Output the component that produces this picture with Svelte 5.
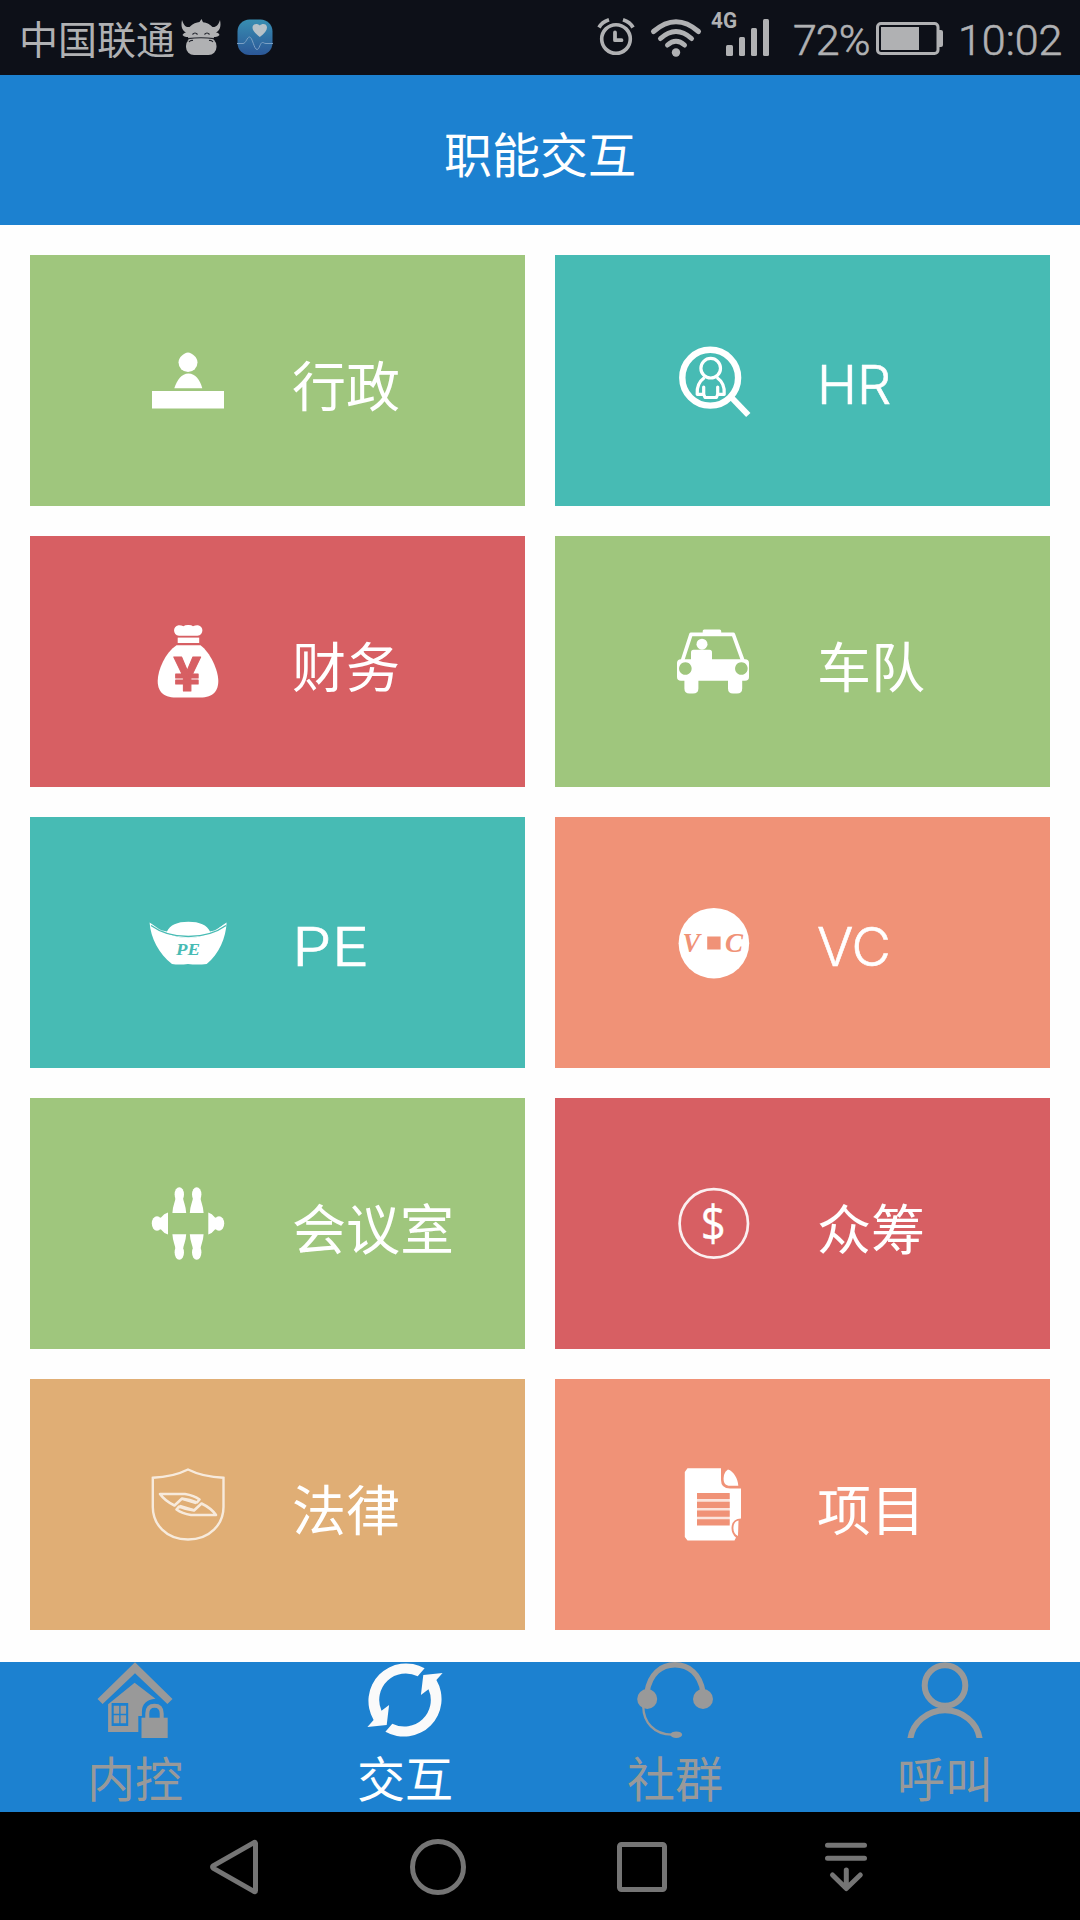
<script>
  const tiles = [
    { label: '行政', icon: 'desk', tone: 'green' },
    { label: 'HR', icon: 'search', tone: 'teal', latin: true },
    { label: '财务', icon: 'bag', tone: 'red' },
    { label: '车队', icon: 'car', tone: 'green' },
    { label: 'PE', icon: 'ingot', tone: 'teal', latin: true, wide: true },
    { label: 'VC', icon: 'coin', tone: 'coral', latin: true },
    { label: '会议室', icon: 'meeting', tone: 'green' },
    { label: '众筹', icon: 'dollar', tone: 'red' },
    { label: '法律', icon: 'shield', tone: 'sand' },
    { label: '项目', icon: 'doc', tone: 'coral' }
  ];
  const tabs = [
    { label: '内控', icon: 'house' },
    { label: '交互', icon: 'sync', active: true },
    { label: '社群', icon: 'headset' },
    { label: '呼叫', icon: 'person' }
  ];
</script>

<div class="screen">
  <div class="status">
    <span class="carrier">中国联通</span>
    <svg class="cow" viewBox="0 0 40 38" width="40" height="38">
      <path fill="#b0b1b3" d="M1 2C3 8 5 9.500 8.500 9C12 5.500 15.500 4.300 18.500 4L20.500 1L22 4.300C26 4.800 29 6.500 31.500 9C35 9.500 37.500 7 39 2C40.500 9 38.500 12.500 35 14.500C37 14.700 38 15.500 38.500 17C36.500 19 34.500 19 33 19L32.500 22H7.500L7 19C5 19 3.500 19 1.500 17C2.500 15.500 3.500 14.700 5 14.500C1.500 12.500-.5 9 1 2Z" />
      <rect x="5" y="20" width="30.500" height="17" rx="8" fill="#b0b1b3" />
      <path fill="none" stroke="#20232b" stroke-width="1.200" d="M7 20.700Q20 18.800 33 20.700M11.500 16.500q2.500-3 5 0M23.500 16.500q2.500-3 5 0M8 24q1.500-2 4-1.500M32 24q-1.500-2-4-1.500" />
    </svg>
    <svg class="health" viewBox="0 0 36 37" width="36" height="37">
      <defs>
        <linearGradient id="health-bg" x1="0" y1="0" x2="0" y2="1">
          <stop offset="0" stop-color="#388eb2" />
          <stop offset="1" stop-color="#2b5797" />
        </linearGradient>
      </defs>
      <rect x=".5" y=".5" width="35" height="35.500" rx="12" fill="url(#health-bg)" />
      <path d="M0 24.500H6C9 24.500 10 18 12.500 18C15.500 18 17 30.500 20 30.500C22.500 30.500 23 23.500 25.500 23.500C27 23.500 27 24.500 29 24.500H36" fill="none" stroke="#7ba0c4" stroke-width="1" />
      <path d="M22.800 18C18 14 15.500 11.500 15.500 8.500C15.500 4.500 20.500 4 22.800 6.500C25 4 30 4.500 30 8.500C30 11.500 27.500 14.500 22.800 18Z" fill="#b7c2c8" />
    </svg>
    <div class="spacer"></div>
    <svg class="alarm" viewBox="0 0 38 38" width="38" height="38" fill="none" stroke="#b0b1b3">
      <circle cx="19" cy="21" r="14.300" stroke-width="3.600" />
      <path d="M18 14.500V22.200H24.500" stroke-width="3.800" stroke-linecap="round" stroke-linejoin="round" />
      <path d="M2 9.500Q5 4 12 1.800M36 9.500Q33 4 26 1.800" stroke-width="3.800" />
    </svg>
    <svg class="wifi" viewBox="0 0 50 38" width="50" height="38" fill="none" stroke="#b0b1b3" stroke-width="5" stroke-linecap="round">
      <path d="M2.500 12.500Q25-7 47.500 12.500M9.500 19.500Q25 5.500 40.500 19.500M16.500 26Q25 18.500 33.500 26" />
      <circle cx="25" cy="33.500" r="4.200" fill="#b0b1b3" stroke="none" />
    </svg>
    <svg class="signal" viewBox="0 0 58 46" width="58" height="46" fill="#b0b1b3">
      <text x="0" y="17" textLength="26" lengthAdjust="spacingAndGlyphs">4G</text>
      <rect x="15" y="34" width="7" height="11" rx="1.500" />
      <rect x="28" y="26" width="6" height="19" rx="1.500" />
      <rect x="40" y="17" width="6" height="28" rx="1.500" />
      <rect x="52" y="8" width="6" height="37" rx="1.500" />
    </svg>
    <span class="percent">72%</span>
    <svg class="battery" viewBox="0 0 67 33" width="67" height="33">
      <rect x="1.500" y="1.500" width="60.500" height="30" rx="3.500" fill="none" stroke="#b0b1b3" stroke-width="3" />
      <rect x="5" y="5" width="38" height="23" fill="#b0b1b3" />
      <path d="M63 8h2a2 2 0 0 1 2 2v13a2 2 0 0 1-2 2h-2z" fill="#b0b1b3" />
    </svg>
    <span class="clock">10:02</span>
  </div>

  <header><h1>职能交互</h1></header>

  <main>
    {#each tiles as tile}
      <div class="tile {tile.tone}">
        <svg class="glyph" viewBox="0 0 76 76" width="76" height="76" fill="#fff">
          {#if tile.icon === 'desk'}
            <path d="M38 9.500C42 10 47.500 14 47.500 19.500A9.500 9.500 0 0 1 28.500 19.500C28.500 14 34 10 38 9.500Z" />
            <path d="M24.300 45.300C27 37 31.500 30.500 38.500 30.500S50 37 52.300 45.300Z" />
            <rect x="2" y="48" width="72" height="17.500" />
          {:else if tile.icon === 'search'}
            <g fill="none" stroke="#fff">
              <circle cx="35.200" cy="34.700" r="27.900" stroke-width="6.400" />
              <path d="M56 54L73.300 72" stroke-width="6" />
              <g stroke-width="3.200" stroke-linejoin="round">
                <circle cx="35.700" cy="25.200" r="9.800" />
                <path d="M29.500 34.500C24 38.500 21.500 43 22.200 51.300H28.700V44V51.300L30 54.500H41.400L42.700 51.300V44V51.300H49.200C50 43 47.500 38.500 41.900 34.500" />
              </g>
            </g>
          {:else if tile.icon === 'bag'}
            <path d="M29 11.800C22.500 11 22.500 2 28.500 1.200Q31 .9 33.500 2.300Q35 .8 38.300 .9Q41.500 .8 43 2.300Q45.500 .9 48 1.200C54 2 54 11 47.500 11.800Z" />
            <rect x="27.700" y="13.600" width="21.500" height="5.400" />
            <path d="M26.500 21.200H50.500C60 28 68.300 46 68.300 57C68.300 66 64 73.500 50 73.500H26C12 73.500 7.700 66 7.700 57C7.700 46 15 29 26.500 21.200Z" />
            <text class="yen" x="23.500" y="66.500" textLength="27.500" lengthAdjust="spacingAndGlyphs">¥</text>
          {:else if tile.icon === 'car'}
            <path d="M7.300 37L16 10.300H58.300L68 37" fill="none" stroke="#fff" stroke-width="3.700" stroke-linejoin="round" />
            <rect x="27.700" y="5.500" width="18.500" height="6" rx="1.500" />
            <circle cx="27" cy="20.200" r="5.500" />
            <rect x="16" y="25.700" width="21" height="16" rx="2.500" />
            <path fill-rule="evenodd" d="M6 35.200H70Q74 35.200 74 39V53Q74 56.800 70 56.800H67.200V64.500Q67.200 69.500 62 69.500H58Q53 69.500 53 64.500V56.800H23.400V64.500Q23.400 69.500 18 69.500H14.500Q9.400 69.500 9.400 64.500V56.800H6Q2 56.800 2 53V39Q2 35.200 6 35.200ZM10.300 38.200a6.300 6.300 0 1 0 .1 0ZM66.300 38.200a6.300 6.300 0 1 0 .1 0Z" />
          {:else if tile.icon === 'ingot'}
            <path d="M-.4 17.500Q38 48.500 76.600 17.500C76 33 69 49 56.700 59Q47 60 38 59Q29 60 22 59C9 49 .5 33-.4 17.500Z" />
            <path d="M-.4 17.500Q8 25 17 26.500C20 20 27 16.700 38.400 16.700S57 20 60 26.500Q69 25 76.600 17.500Q57 33 38.400 33T-.4 17.500Z" />
            <path d="M1 20.500Q16 31.500 38.400 31.500T76 20.500" class="teal-line" />
            <text class="pe" x="26" y="49.500" textLength="24" lengthAdjust="spacingAndGlyphs">PE</text>
          {:else if tile.icon === 'coin'}
            <circle cx="38.900" cy="38.200" r="35.300" />
            <text class="vc" x="7.500" y="47" textLength="17.500" lengthAdjust="spacingAndGlyphs">V</text>
            <rect class="hole" x="32.200" y="31.500" width="13.400" height="13" />
            <text class="vc" x="50" y="47" textLength="18" lengthAdjust="spacingAndGlyphs">C</text>
          {:else if tile.icon === 'meeting'}
            {#each [29.3, 46.7] as x}
              <g transform="translate({x} 0)">
                <ellipse cy="8.500" rx="4.700" ry="7.300" />
                <path d="M-3.500 11H3.500C4 15 6.600 20 6.900 27H-6.900C-6.600 20-4 15-3.500 11Z" />
                <ellipse cy="66.500" rx="4.700" ry="7.300" />
                <path d="M-3.500 64H3.500C4 60 6.600 55 6.900 48.300H-6.900C-6.600 55-4 60-3.500 64Z" />
              </g>
            {/each}
            <ellipse cx="69" cy="37.500" rx="5.200" ry="7.300" />
            <path d="M58.300 26.500Q62 27.500 65 31.500L70 33V42L65 43.500Q62 47.500 58.300 48.500Z" />
            <ellipse cx="7" cy="37.500" rx="5.200" ry="7.300" />
            <path d="M18 26.500Q14 27.500 11 31.500L6 33V42L11 43.500Q14 47.500 18 48.500Z" />
          {:else if tile.icon === 'dollar'}
            <circle cx="38.800" cy="37.400" r="34.200" fill="none" stroke="#fff" stroke-width="2.700" opacity=".9" />
            <text class="usd" x="25.800" y="54.500" textLength="25" lengthAdjust="spacingAndGlyphs">$</text>
          {:else if tile.icon === 'shield'}
            <g fill="none" stroke="#fff" opacity=".75">
              <path stroke-width="2.400" d="M38 2.500Q23 10 2.800 10.800V40C2.800 57 16 72.500 38 72.500S73.500 57 73.500 40V10.800Q53 10 38 2.500Z" />
              <path stroke-width="2.600" stroke-linejoin="round" d="M10 27H35Q44 28.500 49.500 32.500L47 35.500Q40 32.500 32 31.500L24.500 38.500Q15 34 10 27Z" />
              <path stroke-width="2.600" stroke-linejoin="round" d="M66 48H41Q32 46.500 26.500 42.500L29 39.500Q36 42.500 44 43.500L51.500 36.500Q61 41 66 48Z" />
              <path stroke-width="1.600" d="M31 32L46 36.500M45 43L30 38.500" />
            </g>
          {:else}
            <path d="M12.500 1.200H46V13Q46 21.500 55 21.500H66V51.500Q57 51.500 56.500 61Q56.500 67 61 70.500L59.500 73.500H12.500L9.800 70V5Z" />
            <path d="M53 2.500C58.500 4 63 12 63.300 18.800H55C50.500 18.800 48.600 16 48.600 12C48.600 7 50.500 4 53 2.500Z" />
            <path d="M63.500 53.500C59.500 54.500 58.400 57.500 58.400 61C58.400 65 60 67.500 63 69Z" />
            <rect class="hole" x="22" y="27" width="32.700" height="30" opacity=".25" />
            <path d="M22 29H54.700M22 37.800H54.700M22 46.600H54.700M22 55.400H54.700" class="rows" />
          {/if}
        </svg>
        <span class:latin={tile.latin} class:wide={tile.wide}>{tile.label}</span>
      </div>
    {/each}
  </main>

  <nav class="tabs">
    {#each tabs as tab}
      <div class="tab" class:active={tab.active}>
        <svg viewBox="0 0 76 76" width="76" height="76" fill="currentColor">
          {#if tab.icon === 'house'}
            <path d="M38 .3L75.500 37L70.400 42L38 11.300L5.600 42L.5 37Z" />
            <path fill-rule="evenodd" d="M37.600 20.700L58.500 36.800Q44.900 38 44.900 50V54H41.300V70H11.100V42.300ZM14.600 41V64H31.200V41Z" />
            <path d="M16.700 43.700h5.500v8h-5.500zM23.600 43.700h5.500v8h-5.500zM16.700 53.300h5.500v8h-5.500zM23.600 53.300h5.500v8h-5.500z" />
            <rect x="44.500" y="55.700" width="26.200" height="20.300" />
            <path d="M50.300 57V51.500Q50.300 43.700 57.500 43.700T64.700 51.500V57" fill="none" stroke="currentColor" stroke-width="4" />
          {:else if tab.icon === 'sync'}
            <path id="half" d="M57.600 6.300L50.700 14.300A26.500 26.500 0 0 0 14.500 48.700L22.100 43L19.700 63L.4 65L6.600 58A37.600 37.600 0 0 1 57.600 6.300Z" />
            <use href="#half" transform="rotate(180 38 38)" />
          {:else if tab.icon === 'headset'}
            <path d="M10 30C13 12 24 2.800 38 2.800S63 12 66 30" fill="none" stroke="currentColor" stroke-width="5.400" />
            <circle cx="10.200" cy="37" r="10" />
            <circle cx="66" cy="37" r="10" />
            <path d="M6.300 45C6.500 60 17 72.500 35 72.700" fill="none" stroke="currentColor" stroke-width="2.300" />
            <ellipse cx="39.300" cy="72.700" rx="5.800" ry="3.300" />
          {:else}
            <g fill="none" stroke="currentColor" stroke-width="6">
              <circle cx="38" cy="23.500" r="20.300" />
              <path d="M3.300 77A35 33 0 0 1 72.700 77" />
            </g>
          {/if}
        </svg>
        <span>{tab.label}</span>
      </div>
    {/each}
  </nav>

  <div class="system">
    <svg viewBox="0 0 60 60" width="60" height="60"><path d="M51 6.500Q51.500 4.500 49.500 5.800L9.500 28.600Q7.500 30 9.500 31.400L49.500 54.200Q51.500 55.500 51.500 53.500V6.500Z" /></svg>
    <svg viewBox="0 0 60 60" width="60" height="60"><circle cx="30" cy="30" r="25.500" /></svg>
    <svg viewBox="0 0 60 60" width="60" height="60"><rect x="7.500" y="7.500" width="45" height="45" rx="2" /></svg>
    <svg viewBox="0 0 60 60" width="60" height="60"><path d="M11.500 8.300H48.500M11.500 21.300H48.500M30.300 33V51M16.500 38L30.300 51.500L44.300 38" /></svg>
  </div>
</div>

<style>
  :global(body) { margin: 0; background: #fefefe; }
  .screen {
    display: flex;
    flex-direction: column;
    width: 1080px;
    height: 1920px;
    background: #fefefe;
    font-family: 'Noto Sans CJK SC', sans-serif;
  }
  svg { display: block; flex: none; overflow: visible; }
  span, h1 { white-space: nowrap; }

  .status {
    display: flex;
    align-items: flex-start;
    box-sizing: border-box;
    height: 75px;
    padding: 0 16px 0 19px;
    background: #0d1018;
    color: #b0b1b3;
  }
  .spacer { flex: 1; }
  .carrier { width: 162px; padding-top: 17px; font-size: 39px; line-height: 40px; font-weight: 400; }
  .cow { margin-top: 18px; }
  .health { margin: 19px 0 0 16px; }
  .alarm { margin-top: 18px; }
  .wifi { margin: 19px 0 0 16px; }
  .signal { margin: 11px 0 0 10px; }
  .signal text { font: 700 22px Roboto, sans-serif; }
  .percent, .clock { padding-top: 15px; font: 300 43px/50px Roboto, sans-serif; -webkit-text-stroke: 0.6px #b0b1b3; }
  .percent { width: 83px; margin-left: 24px; letter-spacing: -1px; }
  .battery { margin-top: 22px; }
  .clock { width: 106px; margin-left: 15px; }

  header {
    display: flex;
    align-items: center;
    justify-content: center;
    height: 150px;
    background: #1c81d0;
  }
  h1 { margin: 0; padding-top: 3px; color: #fff; font-size: 48px; line-height: 60px; font-weight: 400; }

  main {
    display: grid;
    grid-template-columns: 1fr 1fr;
    grid-auto-rows: 251px;
    gap: 30px;
    flex: 1;
    padding: 30px;
  }
  .tile {
    display: flex;
    align-items: center;
    gap: 66px;
    padding-left: 120px;
    color: #fff;
    font-size: 54px;
    line-height: 70px;
    font-weight: 400;
  }
  .tile span { padding-top: 6px; }
  .tile .latin {
    padding-top: 8px;
    font-family: Inter, sans-serif;
    font-weight: 300;
    -webkit-text-stroke: 0.6px #fff;
  }
  .tile .wide { transform: scaleX(1.17); transform-origin: left; }
  .green { background: #9fc67d; }
  .teal { background: #47bbb4; }
  .red { background: #d75f63; }
  .coral { background: #f09277; }
  .sand { background: #e0ae75; }

  .yen { font: 700 49px Roboto, sans-serif; fill: #d75f63; stroke: #d75f63; stroke-width: 1px; stroke-linejoin: round; }
  .teal-line { fill: none; stroke: #47bbb4; stroke-width: 1.3px; }
  .pe { font: italic 700 17.5px 'Liberation Serif', serif; fill: #47bbb4; }
  .vc { font: italic 700 28px 'Liberation Serif', serif; fill: #f09277; }
  .hole { fill: #f09277; }
  .usd { font: 400 50px 'Open Sans', sans-serif; stroke: #fff; stroke-width: 0.3px; }
  .rows { stroke: #f09277; stroke-width: 6.2px; stroke-linecap: butt; }

  .tabs { display: grid; grid-template-columns: repeat(4, 1fr); height: 150px; background: #1c81d0; }
  .tab { display: flex; flex-direction: column; align-items: center; color: #999; overflow: hidden; }
  .tab svg { overflow: hidden; }
  .tab span { padding-top: 8px; font-size: 48px; line-height: 60px; }
  .tab.active { color: #fff; }
  .tab.active svg { color: #fafafa; }

  .system {
    display: flex;
    align-items: center;
    gap: 144px;
    box-sizing: border-box;
    height: 108px;
    padding: 2px 0 0 204px;
    background: #000;
  }
  .system svg { fill: none; stroke: #757575; stroke-width: 5px; stroke-linecap: round; stroke-linejoin: round; }
</style>
